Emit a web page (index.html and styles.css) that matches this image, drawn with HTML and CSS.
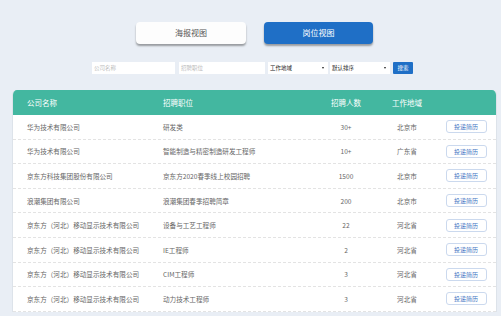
FILE: index.html
```html
<html>
    <head>
        <title>岗位视图</title>
        <link rel="stylesheet" href="styles.css">
    </head>
    <body>
        <div class="page">
            <div class="tabs">
                <div class="tab">海报视图</div>
                <div class="tab active">岗位视图</div>
            </div>
            <div class="searchBar">
                <div class="field wide">公司名称</div>
                <div class="field wide2">招聘职位</div>
                <div class="field pick">工作地域<span class="arrow"></span></div>
                <div class="field pick">默认排序<span class="arrow"></span></div>
                <div class="searchBtn">搜索</div>
            </div>
            <div class="jobTable">
                <div class="row head">
                    <div>公司名称</div>
                    <div>招聘职位</div>
                    <div class="mid">招聘人数</div>
                    <div class="mid">工作地域</div>
                    <div></div>
                </div>
                <div class="row">
                    <div>华为技术有限公司</div>
                    <div>研发类</div>
                    <div class="mid">30+</div>
                    <div class="mid">北京市</div>
                    <div class="mid"><span class="apply">投递简历</span></div>
                </div>
                <div class="row">
                    <div>华为技术有限公司</div>
                    <div>智能制造与精密制造研发工程师</div>
                    <div class="mid">10+</div>
                    <div class="mid">广东省</div>
                    <div class="mid"><span class="apply">投递简历</span></div>
                </div>
                <div class="row">
                    <div>京东方科技集团股份有限公司</div>
                    <div>京东方2020春季线上校园招聘</div>
                    <div class="mid">1500</div>
                    <div class="mid">北京市</div>
                    <div class="mid"><span class="apply">投递简历</span></div>
                </div>
                <div class="row">
                    <div>浪潮集团有限公司</div>
                    <div>浪潮集团春季招聘简章</div>
                    <div class="mid">200</div>
                    <div class="mid">北京市</div>
                    <div class="mid"><span class="apply">投递简历</span></div>
                </div>
                <div class="row">
                    <div>京东方（河北）移动显示技术有限公司</div>
                    <div>设备与工艺工程师</div>
                    <div class="mid">22</div>
                    <div class="mid">河北省</div>
                    <div class="mid"><span class="apply">投递简历</span></div>
                </div>
                <div class="row">
                    <div>京东方（河北）移动显示技术有限公司</div>
                    <div>IE工程师</div>
                    <div class="mid">2</div>
                    <div class="mid">河北省</div>
                    <div class="mid"><span class="apply">投递简历</span></div>
                </div>
                <div class="row">
                    <div>京东方（河北）移动显示技术有限公司</div>
                    <div>CIM工程师</div>
                    <div class="mid">3</div>
                    <div class="mid">河北省</div>
                    <div class="mid"><span class="apply">投递简历</span></div>
                </div>
                <div class="row">
                    <div>京东方（河北）移动显示技术有限公司</div>
                    <div>动力技术工程师</div>
                    <div class="mid">3</div>
                    <div class="mid">河北省</div>
                    <div class="mid"><span class="apply">投递简历</span></div>
                </div>
            </div>
        </div>
    </body>
</html>
```

FILE: styles.css
```css
body {
    margin: 0;
    background-color: #e9eef5;
    font-family: "Noto Sans CJK SC", "Noto Sans", sans-serif;
    overflow: hidden;
}
.page {
    width: 501px;
    height: 316px;
    padding-top: 22px;
    box-sizing: border-box;
}
.tabs {
    display: flex;
    gap: 18px;
    padding-left: 136px;
}
.tab {
    width: 110px;
    height: 22px;
    line-height: 22px;
    text-align: center;
    font-size: 8px;
    color: #555;
    background-color: #fdfdfd;
    border-radius: 4px;
    box-shadow: 0 2px 2px rgba(0, 0, 0, 0.35);
}
.tab.active {
    width: 109px;
    background-color: #1f6fc6;
    color: #fff;
}
.searchBar {
    display: flex;
    margin-top: 18px;
    padding-left: 92px;
    height: 12px;
}
.field {
    height: 12px;
    line-height: 12px;
    background-color: #fff;
    font-size: 5.5px;
    color: #bbb;
    padding-left: 2px;
    box-sizing: border-box;
    position: relative;
}
.wide {
    width: 83px;
    margin-right: 4px;
}
.wide2 {
    width: 86px;
    margin-right: 3px;
}
.pick {
    width: 60px;
    margin-right: 2px;
    color: #222;
}
.arrow {
    position: absolute;
    right: 4px;
    top: 5px;
    border-left: 1.5px solid transparent;
    border-right: 1.5px solid transparent;
    border-top: 2px solid #222;
}
.searchBtn {
    width: 20px;
    height: 12px;
    line-height: 12px;
    margin-left: 1px;
    background-color: #1f6fc6;
    color: #fff;
    font-size: 5.5px;
    text-align: center;
    border-radius: 1px;
}
.jobTable {
    margin: 16px 4px 0 12px;
    background-color: #fff;
    border-radius: 5px 5px 0 0;
    border-left: 1px solid #dde3ea;
    border-right: 1px solid #dde3ea;
    overflow: hidden;
}
.row {
    display: grid;
    grid-template-columns: 136px 153px 60px 62px 1fr;
    align-items: center;
    height: 24.6px;
    padding-left: 14px;
    box-sizing: border-box;
    border-bottom: 1px dashed #e3e3e3;
    font-size: 6.6px;
    color: #666;
    white-space: nowrap;
}
.row.head {
    height: 25px;
    background-color: #43b7a0;
    color: #fff;
    font-size: 7.5px;
    border-bottom: none;
}
.mid {
    text-align: center;
}
.apply {
    display: inline-block;
    width: 41px;
    height: 13px;
    line-height: 12px;
    box-sizing: border-box;
    border: 1px solid #cbd9ee;
    border-radius: 3px;
    color: #3d72c2;
    font-size: 6px;
    margin-right: 2px;
}
```
